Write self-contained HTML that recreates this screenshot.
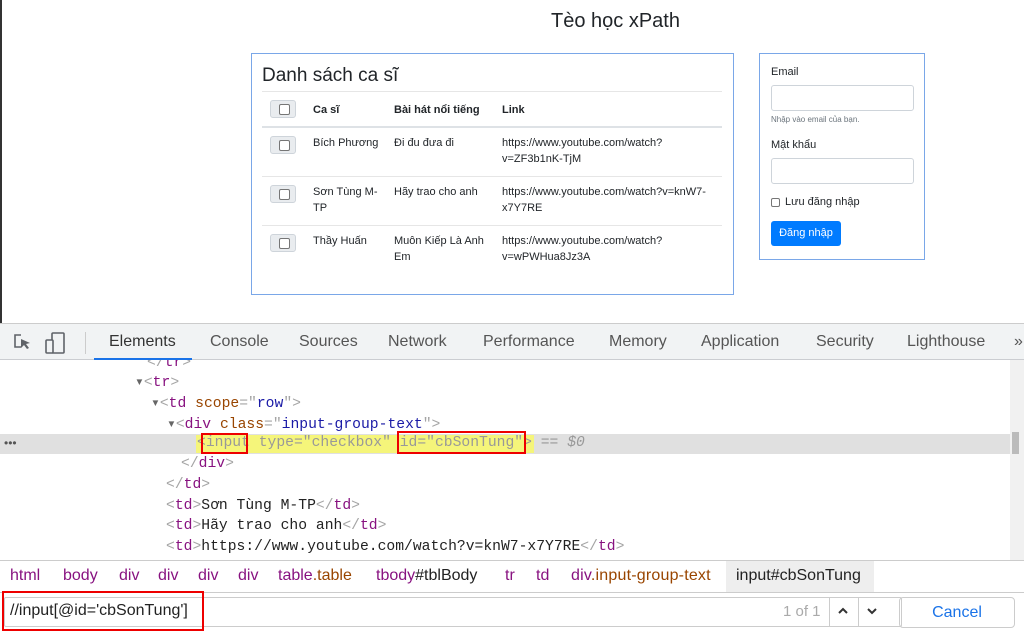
<!DOCTYPE html>
<html><head><meta charset="utf-8"><style>
*{margin:0;padding:0;box-sizing:border-box}
body{width:1024px;height:632px;overflow:hidden;background:#fff;font-family:"Liberation Sans",sans-serif;position:relative;color:#212529}
.a{position:absolute;white-space:nowrap}
.cb{position:absolute;width:26px;height:18px;background:#e9ecef;border:1px solid #ced4da;border-radius:3px}
.cb:after{content:"";position:absolute;left:8px;top:3px;width:9px;height:9px;border:1px solid #767676;border-radius:2px;background:#fff}
.t{font-size:11px;color:#212529}
.code{position:absolute;left:0;font-family:"Liberation Mono",monospace;font-size:14.7px;white-space:pre;color:#222}
.tg{color:#881280}.br{color:#a5a5a5}.at{color:#994500}.av{color:#1a1aa6}
.tab{position:absolute;top:333px;font-size:16px;color:#555}
.bc{position:absolute;top:567px;font-size:16px;color:#881280}
</style></head><body>
<div class="a" style="left:0;top:0;width:2px;height:324px;background:#333"></div>
<div class="a" style="left:551px;top:10px;font-size:20px">Tèo học xPath</div>
<div class="a" style="left:251px;top:53px;width:483px;height:242px;border:1px solid #7aa7e8"></div>
<div class="a" style="left:262px;top:65px;font-size:19px">Danh sách ca sĩ</div>
<div class="a" style="left:262px;top:91px;width:460px;height:1px;background:#e6e6e6"></div>
<div class="cb" style="left:270px;top:100px"></div>
<div class="a t" style="left:313px;top:104px;font-weight:bold">Ca sĩ</div>
<div class="a t" style="left:394px;top:104px;font-weight:bold">Bài hát nổi tiếng</div>
<div class="a t" style="left:502px;top:104px;font-weight:bold">Link</div>
<div class="a" style="left:262px;top:126px;width:460px;height:2px;background:#dee2e6"></div>
<div class="cb" style="left:270px;top:136px"></div>
<div class="a t" style="left:313px;top:137px">Bích Phương</div>
<div class="a t" style="left:394px;top:137px">Đi đu đưa đi</div>
<div class="a t" style="left:502px;top:135px;line-height:16px">https://www.youtube.com/watch?<br>v=ZF3b1nK-TjM</div>
<div class="a" style="left:262px;top:176px;width:460px;height:1px;background:#e6e6e6"></div>
<div class="cb" style="left:270px;top:185px"></div>
<div class="a t" style="left:313px;top:184px;line-height:16px">Sơn Tùng M-<br>TP</div>
<div class="a t" style="left:394px;top:186px">Hãy trao cho anh</div>
<div class="a t" style="left:502px;top:184px;line-height:16px">https://www.youtube.com/watch?v=knW7-<br>x7Y7RE</div>
<div class="a" style="left:262px;top:225px;width:460px;height:1px;background:#e6e6e6"></div>
<div class="cb" style="left:270px;top:234px"></div>
<div class="a t" style="left:313px;top:235px">Thầy Huấn</div>
<div class="a t" style="left:394px;top:233px;line-height:16px">Muôn Kiếp Là Anh<br>Em</div>
<div class="a t" style="left:502px;top:233px;line-height:16px">https://www.youtube.com/watch?<br>v=wPWHua8Jz3A</div>

<div class="a" style="left:759px;top:53px;width:166px;height:207px;border:1px solid #7aa7e8"></div>
<div class="a t" style="left:771px;top:66px">Email</div>
<div class="a" style="left:771px;top:85px;width:143px;height:26px;border:1px solid #ced4da;border-radius:3px"></div>
<div class="a" style="left:771px;top:115px;font-size:8px;color:#6c757d">Nhập vào email của bạn.</div>
<div class="a t" style="left:771px;top:139px">Mật khẩu</div>
<div class="a" style="left:771px;top:158px;width:143px;height:26px;border:1px solid #ced4da;border-radius:3px"></div>
<div class="a" style="left:771px;top:198px;width:9px;height:9px;border:1px solid #767676;border-radius:2px"></div>
<div class="a t" style="left:785px;top:196px">Lưu đăng nhập</div>
<div class="a" style="left:771px;top:221px;width:70px;height:25px;background:#007bff;border-radius:3px;color:#fff;font-size:11px;text-align:center;line-height:25px">Đăng nhập</div>

<div class="a" style="left:0;top:434px;width:1010px;height:20px;background:#e0e0e0"></div>
<div class="a" style="left:196px;top:435px;width:338px;height:18px;background:#f5f57a"></div>
<div class="a" style="left:1010px;top:360px;width:14px;height:200px;background:#f1f1f1"></div>
<div class="a" style="left:1012px;top:432px;width:7px;height:22px;background:#bbb"></div>
<div class="code" style="top:355px;left:147px"><span class="br">&lt;/</span><span class="tg">tr</span><span class="br">&gt;</span></div>
<div class="code" style="top:373px;left:135px"><span style="color:#666">▾</span><span class="br">&lt;</span><span class="tg">tr</span><span class="br">&gt;</span></div>
<div class="code" style="top:394px;left:151px"><span style="color:#666">▾</span><span class="br">&lt;</span><span class="tg">td</span> <span class="at">scope</span><span class="br">="</span><span class="av">row</span><span class="br">"&gt;</span></div>
<div class="code" style="top:415px;left:167px"><span style="color:#666">▾</span><span class="br">&lt;</span><span class="tg">div</span> <span class="at">class</span><span class="br">="</span><span class="av">input-group-text</span><span class="br">"&gt;</span></div>
<div class="code" style="top:435px;left:197px;color:#999">&lt;input type="checkbox" id="cbSonTung"&gt; == <i>$0</i></div>
<div class="a" style="left:4px;top:436px;font-size:12px;color:#555">•••</div>
<div class="code" style="top:456px;left:181px"><span class="br">&lt;/</span><span class="tg">div</span><span class="br">&gt;</span></div>
<div class="code" style="top:477px;left:166px"><span class="br">&lt;/</span><span class="tg">td</span><span class="br">&gt;</span></div>
<div class="code" style="top:498px;left:166px"><span class="br">&lt;</span><span class="tg">td</span><span class="br">&gt;</span>Sơn Tùng M-TP<span class="br">&lt;/</span><span class="tg">td</span><span class="br">&gt;</span></div>
<div class="code" style="top:518px;left:166px"><span class="br">&lt;</span><span class="tg">td</span><span class="br">&gt;</span>Hãy trao cho anh<span class="br">&lt;/</span><span class="tg">td</span><span class="br">&gt;</span></div>
<div class="code" style="top:539px;left:166px"><span class="br">&lt;</span><span class="tg">td</span><span class="br">&gt;</span>https://www.youtube.com/watch?v=knW7-x7Y7RE<span class="br">&lt;/</span><span class="tg">td</span><span class="br">&gt;</span></div>
<div class="a" style="left:201px;top:433px;width:47px;height:21px;border:2px solid #e00"></div>
<div class="a" style="left:397px;top:431px;width:129px;height:23px;border:2px solid #e00"></div>

<div class="a" style="left:0;top:323px;width:1024px;height:1px;background:#ccc"></div>
<div class="a" style="left:0;top:324px;width:1024px;height:36px;background:#f1f3f4;border-bottom:1px solid #cbcdd1"></div>
<svg class="a" style="left:13px;top:333px" width="20" height="20" viewBox="0 0 20 20"><path d="M8 2H2v12h6" fill="none" stroke="#5f6368" stroke-width="1.6"/><path d="M8 6l9 4-4 1 3 4-2 1-3-4-3 3z" fill="#5f6368"/></svg>
<svg class="a" style="left:43px;top:331px" width="26" height="24" viewBox="0 0 26 24"><rect x="9" y="2" width="12" height="20" rx="1" fill="none" stroke="#5f6368" stroke-width="1.6"/><rect x="3" y="9" width="7" height="13" rx="1" fill="#f1f3f4" stroke="#5f6368" stroke-width="1.6"/></svg>
<div class="a" style="left:85px;top:332px;width:1px;height:22px;background:#ccc"></div>
<div class="tab" style="left:109px;color:#333">Elements</div>
<div class="a" style="left:94px;top:358px;width:98px;height:2px;background:#1a73e8"></div>
<div class="tab" style="left:210px">Console</div>
<div class="tab" style="left:299px">Sources</div>
<div class="tab" style="left:388px">Network</div>
<div class="tab" style="left:483px">Performance</div>
<div class="tab" style="left:609px">Memory</div>
<div class="tab" style="left:701px">Application</div>
<div class="tab" style="left:816px">Security</div>
<div class="tab" style="left:907px">Lighthouse</div>
<div class="tab" style="left:1014px">»</div>

<div class="a" style="left:0;top:560px;width:1024px;height:1px;background:#ccc"></div>
<div class="a" style="left:0;top:592px;width:1024px;height:1px;background:#ccc"></div>
<div class="a" style="left:726px;top:561px;width:148px;height:31px;background:#eee"></div>
<div class="bc" style="left:10px">html</div><div class="bc" style="left:63px">body</div>
<div class="bc" style="left:119px">div</div><div class="bc" style="left:158px">div</div>
<div class="bc" style="left:198px">div</div><div class="bc" style="left:238px">div</div>
<div class="bc" style="left:278px">table<span style="color:#994500">.table</span></div>
<div class="bc" style="left:376px">tbody<span style="color:#222">#tblBody</span></div>
<div class="bc" style="left:505px">tr</div><div class="bc" style="left:536px">td</div>
<div class="bc" style="left:571px;letter-spacing:0.2px">div<span style="color:#994500">.input-group-text</span></div>
<div class="bc" style="left:736px;color:#222">input#cbSonTung</div>
<div class="a" style="left:4px;top:597px;width:898px;height:30px;border:1px solid #ccc;border-radius:2px"></div>
<div class="a" style="left:10px;top:602px;font-size:16px;color:#222">//input[@id='cbSonTung']</div>
<div class="a" style="left:783px;top:603px;font-size:15px;color:#aaa">1 of 1</div>
<div class="a" style="left:829px;top:598px;width:1px;height:28px;background:#ccc"></div>
<svg class="a" style="left:836px;top:605px" width="14" height="12" viewBox="0 0 14 12"><path d="M3 8l4-4 4 4" fill="none" stroke="#333" stroke-width="2"/></svg>
<div class="a" style="left:858px;top:598px;width:1px;height:28px;background:#ccc"></div>
<svg class="a" style="left:865px;top:605px" width="14" height="12" viewBox="0 0 14 12"><path d="M3 4l4 4 4-4" fill="none" stroke="#333" stroke-width="2"/></svg>
<div class="a" style="left:899px;top:597px;width:116px;height:31px;border:1px solid #ccc;border-radius:4px;color:#1a73e8;font-size:16px;text-align:center;line-height:29px">Cancel</div>
<div class="a" style="left:2px;top:591px;width:202px;height:40px;border:2px solid #e00"></div>
</body></html>
